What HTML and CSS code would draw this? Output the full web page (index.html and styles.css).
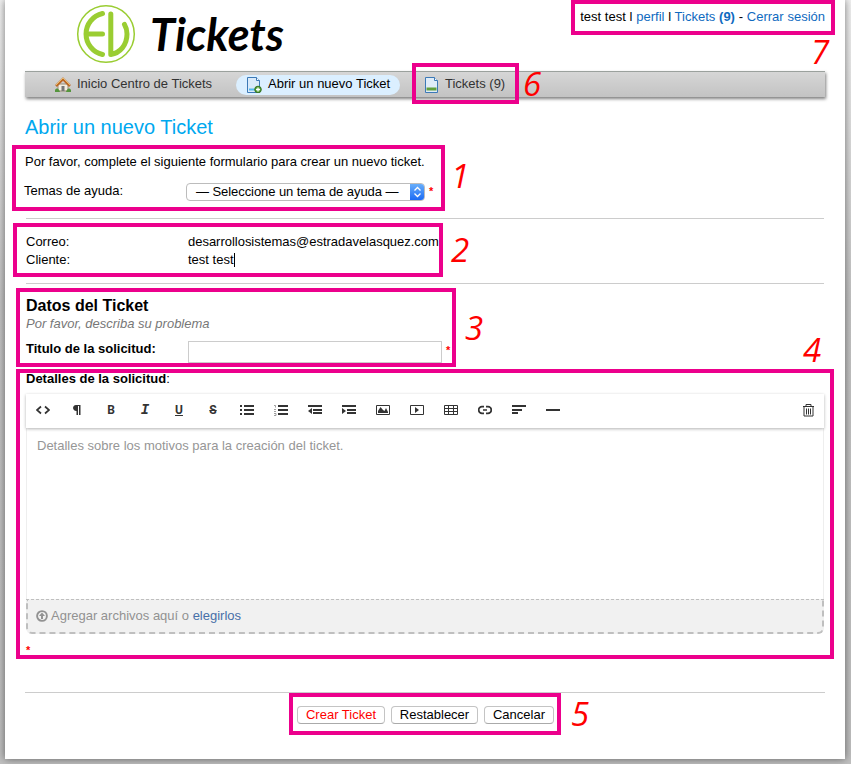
FILE: index.html
```
<!DOCTYPE html>
<html lang="es">
<head>
<meta charset="utf-8">
<title>Abrir un nuevo Ticket</title>
<link rel="stylesheet" href="styles.css">
</head>
<body>
<main class="page">
  <header class="header">
    <svg class="logo" width="225" height="71" viewBox="0 0 225 71">
      <circle cx="29" cy="34" r="28.3" fill="none" stroke="#9acd32" stroke-width="1.5"/>
      <g fill="none" stroke="#9acd32" stroke-width="5" stroke-linecap="round" stroke-linejoin="round">
        <path d="M25.500 13.500A21 21 0 0 0 25.500 54.500M9 34H25.500"/>
        <path d="M33.800 14V54.500C43 53 50 45 50 34C50 30 49 27 47.500 24.500"/>
      </g>
      <text class="wordmark" x="73" y="51" textLength="134" lengthAdjust="spacingAndGlyphs">Tickets</text>
    </svg>
    <div class="account"><span>test test</span> l <a>perfil</a> l <a>Tickets <b>(9)</b></a> - <a>Cerrar sesión</a></div>
  </header>
  <nav class="nav">
    <a class="tab home"><svg width="16" height="16" viewBox="0 0 16 16"><path d="M3 7h10v7H3z" fill="#f3eee2" stroke="#998b72"/><path d="M1 9L8 2l7 7" fill="none" stroke="#bd6926" stroke-width="2.500"/><path d="M1 8L8 1l7 7" fill="none" stroke="#e8bd70"/><path d="M6.500 9h3v5h-3z" fill="#777"/><path d="M0 13c2-3 4-1 5 2H0M16 13c-2-3-4-1-5 2h5" fill="#55953d"/></svg><span>Inicio Centro de Tickets</span></a>
    <a class="tab active"><svg width="16" height="16" viewBox="0 0 16 16"><path d="M1.500.500h9l3 3v12h-12z" fill="#d9eafa" stroke="#3c79b6"/><path d="M10.500.500v3h3" fill="#fff" stroke="#3c79b6"/><path d="M3 12.500h7" stroke="#50b9ed" stroke-width="2"/><circle cx="12" cy="12.500" r="3.300" fill="#519f36" stroke="#367323"/><path d="M10 12.500h4M12 10.500v4" stroke="#fff" stroke-width="1.300"/></svg><span>Abrir un nuevo Ticket</span></a>
    <a class="tab list"><svg width="16" height="16" viewBox="0 0 16 16"><path d="M1.500.500h9l3 3v12h-12z" fill="#dfecf8" stroke="#3c79b6"/><path d="M10.500.500v3h3" fill="#fff" stroke="#3c79b6"/><path d="M2.500 10.500h10v3h-10z" fill="#61a03d"/></svg><span>Tickets (9)</span></a>
  </nav>
  <h1 class="title">Abrir un nuevo Ticket</h1>
  <p class="intro">Por favor, complete el siguiente formulario para crear un nuevo ticket.</p>
  <div class="row topic">
    <span class="label">Temas de ayuda:</span>
    <span class="select"><span class="choice">— Seleccione un tema de ayuda —</span><span class="arrows"><svg width="15" height="18" viewBox="0 0 15 18"><path d="M4.500 7.500l3-3 3 3M4.500 10.500l3 3 3-3" fill="none" stroke="#fff" stroke-width="1.300"/></svg></span></span>
    <span class="req">*</span>
  </div>
  <section class="client">
    <div class="row"><span class="label">Correo:</span><span class="mail">desarrollosistemas@estradavelasquez.com</span></div>
    <div class="row"><span class="label">Cliente:</span><span class="name">test test</span><span class="caret"></span></div>
  </section>
  <section class="details">
    <h2>Datos del Ticket</h2>
    <p class="hint">Por favor, describa su problema</p>
    <div class="row subject"><span class="label"><b>Titulo de la solicitud:</b></span><span class="field"></span><span class="req">*</span></div>
    <div class="caption"><b>Detalles de la solicitud</b>:</div>
    <div class="toolbar">
      <svg viewBox="0 0 14 14"><path d="M5 3.500L1 7l4 3.500M9 3.500L13 7l-4 3.500" stroke-width="1.700"/></svg>
      <svg viewBox="0 0 14 14"><path class="solid" d="M10.500 2v10H9V3H8v9H6.500V8C2 8 2 2 6 2z"/></svg>
      <span class="glyph">B</span>
      <span class="glyph mono"><i>I</i></span>
      <span class="glyph"><u>U</u></span>
      <span class="glyph strike">S</span>
      <svg viewBox="0 0 14 14"><path d="M0 3h2M4 3h10M0 7h2M4 7h10M0 11h2M4 11h10" stroke-width="2"/></svg>
      <svg viewBox="0 0 14 14"><path d="M4 3h10M4 7h10M4 11h10" stroke-width="2"/><path d="M0 2.500h1.500v2M0 6.500h2M0 8.500h2M0 10.500h2v2H0" stroke="#888" stroke-width=".8"/></svg>
      <svg viewBox="0 0 14 14"><path d="M0 3h14M5 7h9M5 10h9" stroke-width="2"/><path class="solid" d="M4 5v6L0 8z"/></svg>
      <svg viewBox="0 0 14 14"><path d="M0 3h14M5 7h9M5 10h9" stroke-width="2"/><path class="solid" d="M0 5v6l4-3z"/></svg>
      <svg viewBox="0 0 14 14"><path d="M.500 2.500h13v9H.500z"/><path class="solid" d="M2 10V8l2.500-4L7 7l1.500 1L10 5l2 4v1z"/></svg>
      <svg viewBox="0 0 14 14"><path d="M.500 2.500h13v9H.500z"/><path class="solid" d="M5 4v6l4-3z"/></svg>
      <svg viewBox="0 0 14 14"><path d="M.500 2.500h13v9H.500zM0 5.500h14M0 8.500h14M4.500 2v10M9.500 2v10"/></svg>
      <svg viewBox="0 0 14 14"><path d="M6 3.700H4A3 3 0 0 0 4 10.300h2M8 3.700h2a3 3 0 0 1 0 6.600H8M5 7h4" stroke-width="1.700"/></svg>
      <svg viewBox="0 0 14 14"><path d="M0 3h14M0 7h10M0 10h6" stroke-width="2"/></svg>
      <svg viewBox="0 0 14 14"><path d="M0 7h14" stroke-width="2"/></svg>
      <svg class="trash" viewBox="0 0 14 14"><path d="M2 3.500h11M5 3.500v-2h5v2M3 3.500v9.500h9V3.500M5.500 5.500v6M7.500 5.500v6M9.500 5.500v6"/></svg>
    </div>
    <div class="editor">Detalles sobre los motivos para la creación del ticket.</div>
    <div class="drop"><svg width="12" height="12" viewBox="0 0 12 12"><circle cx="6" cy="6" r="4.900" fill="none" stroke="#929292" stroke-width="1.900"/><path d="M6 2.500L9 6H7v3H5V6H3z" fill="#929292"/></svg><span>Agregar archivos aquí o <a>elegirlos</a></span></div>
    <div class="req last">*</div>
  </section>
  <footer class="actions">
    <span class="button primary">Crear Ticket</span>
    <span class="button reset">Restablecer</span>
    <span class="button cancel">Cancelar</span>
  </footer>
</main>
<div class="mark m1"></div><div class="mark m2"></div><div class="mark m3"></div><div class="mark m4"></div><div class="mark m5"></div><div class="mark m6"></div><div class="mark m7"></div>
<span class="num n1">1</span><span class="num n2">2</span><span class="num n3">3</span><span class="num n4">4</span><span class="num n5">5</span><span class="num n6">6</span><span class="num n7">7</span>
</body>
</html>
```
FILE: styles.css
```
* { box-sizing: border-box; }
html { height: 764px; overflow: hidden; }
body {
  margin: 0;
  height: 764px;
  background: linear-gradient(#f2f2f2 0, #c4c4c4 300px, #c0c0c0 100%);
  font: 13px/18px "Liberation Sans", Arial, sans-serif;
  color: #000;
  position: relative;
  overflow: hidden;
}
h1, h2, p { margin: 0; font-weight: normal; }
.page {
  width: 840px;
  height: 759px;
  margin-left: 5px;
  padding: 0 20px;
  background: #fff;
  box-shadow: 0 0 8px rgba(0,0,0,.5);
}
.header { height: 71px; display: flex; justify-content: space-between; padding-left: 52px; }
.logo { overflow: visible; }
.wordmark { font: italic bold 46px "Lato", "Open Sans", sans-serif; }
.account { padding-top: 8px; white-space: pre; word-spacing: .15px; }
.account a { color: #0f6ac0; }
.nav {
  height: 26px;
  display: flex;
  align-items: center;
  border-top: 1px solid #9ba19d;
  background: linear-gradient(#d6d6d6, #c3c3c3);
  box-shadow: 1px 2px 3px rgba(0,0,0,.5);
  color: #333;
}
.tab { display: flex; align-items: center; height: 20px; white-space: nowrap; }
.tab svg { margin-right: 6px; flex: none; }
.tab span { margin-top: -2px; }
.home { margin-left: 30px; width: 181px; }
.active { width: 164px; padding-left: 10px; border-radius: 10px; background: #dbefff; color: #000; }
.list { margin-left: 24px; }
.list svg { margin-right: 5px; }
.title { height: 56px; padding-top: 19px; font-size: 20px; line-height: 23px; color: #00a8ef; }
.intro { height: 29px; white-space: nowrap; letter-spacing: -.01px; }
.row { display: flex; align-items: center; height: 18px; }
.label { width: 162px; flex: none; }
.req { color: #f00; font-size: 11px; font-weight: bold; }
.topic { height: 36px; align-items: flex-start; }
.topic .label { width: 161px; margin-left: -1px; }
.topic .select { margin: 1px 4px 0 1px; }
.select { width: 239px; height: 18px; display: flex; border: 1px solid #bcbcbc; border-radius: 4px; overflow: hidden; }
.choice { flex: 1; padding-left: 9px; line-height: 16px; white-space: nowrap; letter-spacing: -.07px; }
.arrows { width: 15px; margin: -1px -1px -1px 0; background: linear-gradient(#6cb2fb, #1767f4); height: 18px; }
.arrows svg, .toolbar svg { display: block; }
.client { height: 65px; margin-left: 1px; width: 798px; border-top: 1px solid #ccc; padding-top: 14px; }
.mail { letter-spacing: -.02px; }
.caret { width: 1px; height: 14px; background: #000; }
.details { height: 409px; margin-left: 1px; width: 798px; border-top: 1px solid #ccc; padding-top: 12px; }
.details h2 { font-weight: bold; font-size: 16px; line-height: 20px; }
.hint { height: 17px; font-style: italic; color: #777; line-height: 15px; }
.subject { height: 37px; align-items: flex-start; padding-top: 8px; }
.field { width: 254px; height: 22px; border: 1px solid #ccc; margin-right: 4px; }
.subject .label { line-height: 16px; }
.caption { height: 24px; line-height: 18px; }
.toolbar {
  height: 34px;
  display: flex;
  align-items: center;
  gap: 20px;
  padding: 0 9px 2px 10px;
  box-shadow: 0 1px 3px rgba(0,0,0,.3);
  position: relative;
  background: #fff;
}
.toolbar svg { width: 14px; height: 14px; fill: none; stroke: #333; flex: none; }
.toolbar .solid { fill: #333; stroke: none; }
.toolbar .trash { margin-left: auto; }
.glyph { width: 14px; text-align: center; font: bold 12px/14px "Roboto", sans-serif; color: #333; }
.mono { font-family: "Liberation Mono", monospace; font-size: 14px; }
.strike { text-decoration: line-through; }
.editor { height: 171px; border: 1px solid #eee; border-width: 0 1px; padding: 9px 10px; color: #969696; }
.drop { height: 35px; display: flex; align-items: center; gap: 3px; padding: 0 8px; border: 2px dashed #bfbfbf; border-top-width: 1px; border-radius: 0 0 6px 6px; background: #f1f1f1; color: #929292; }
.drop a { color: #476fa8; }
.last { line-height: 16px; padding-top: 8px; }
.actions { display: flex; gap: 6px; padding: 13px 0 0 272px; border-top: 1px solid #ccc; }
.button { height: 18px; line-height: 15px; text-align: center; border: 1px solid #c4c4c4; border-bottom-color: #aaa; border-radius: 4px; white-space: nowrap; }
.primary { width: 88px; color: #f00; }
.reset { width: 87px; }
.cancel { width: 70px; }

/* Callouts drawn over the form */
.mark { position: absolute; border: 4px solid #ec008c; }
.m1 { left: 12px; top: 145px; width: 433px; height: 66px; }
.m2 { left: 13px; top: 223px; width: 430px; height: 54px; }
.m3 { left: 16px; top: 288px; width: 440px; height: 79px; }
.m4 { left: 16px; top: 369px; width: 818px; height: 290px; }
.m5 { left: 289px; top: 693px; width: 272px; height: 42px; }
.m6 { left: 412px; top: 63px; width: 107px; height: 41px; }
.m7 { left: 571px; top: 0; width: 264px; height: 35px; }
.num { position: absolute; font: italic 33px/40px "Open Sans", "Noto Sans", sans-serif; color: #f00; }
.n1 { left: 451px; top: 156px; }
.n2 { left: 451px; top: 230px; }
.n3 { left: 465px; top: 308px; }
.n4 { left: 803px; top: 330px; }
.n5 { left: 571px; top: 694px; }
.n6 { left: 523px; top: 64px; }
.n7 { left: 811px; top: 32px; }
```
